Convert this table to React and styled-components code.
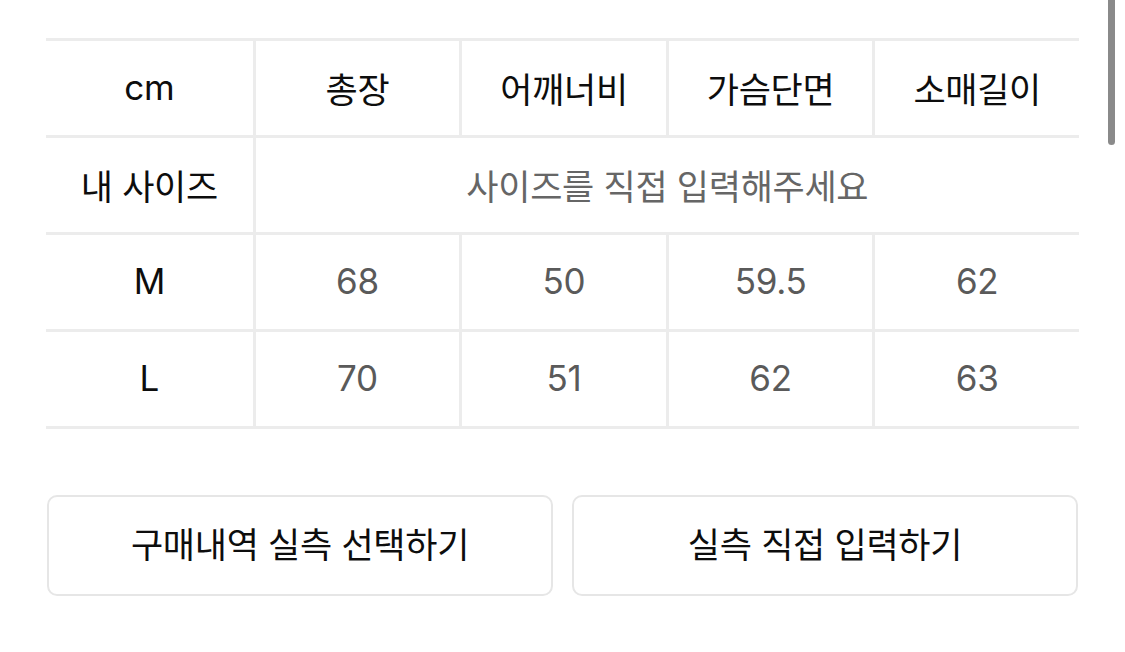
import React from 'react';
import styled, { createGlobalStyle } from 'styled-components';

const GlobalStyle = createGlobalStyle`
  html, body {
    margin: 0;
    padding: 0;
    background: #ffffff;
  }
  body {
    font-family: 'Inter', 'Noto Sans CJK KR', sans-serif;
    color: #111111;
    overflow: hidden;
  }
`;

const Page = styled.div`
  position: relative;
  width: 1125px;
  height: 652px;
  padding: 38px 46px 0;
  box-sizing: border-box;
`;

const Table = styled.div`
  display: grid;
  grid-template-columns: repeat(5, 1fr);
  border-top: 3px solid #ececec;
`;

const Cell = styled.div`
  grid-column: span ${p => p.span || 1};
  height: 97px;
  padding-bottom: 2px;
  box-sizing: border-box;
  display: flex;
  align-items: center;
  justify-content: center;
  border-bottom: 3px solid #ececec;
  border-left: ${p => (p.first ? 'none' : '3px solid #ececec')};
  font-size: 35px;
  font-weight: 400;
  color: ${p => (p.head ? '#0d0d0d' : p.muted ? '#666666' : '#5a5a5a')};
  letter-spacing: -0.3px;
`;

const Actions = styled.div`
  display: flex;
  gap: 19px;
  margin-top: 66px;
  padding: 0 1px;
`;

const ActionButton = styled.button`
  flex: 1;
  height: 101px;
  padding: 0 0 6px;
  background: #ffffff;
  border: 2px solid #e6e6e6;
  border-radius: 10px;
  font-family: 'Inter', 'Noto Sans CJK KR', sans-serif;
  font-size: 35px;
  font-weight: 400;
  color: #0d0d0d;
  letter-spacing: -0.3px;
  cursor: pointer;
`;

const Scrollbar = styled.div`
  position: absolute;
  top: -6px;
  right: 10px;
  width: 7px;
  height: 151px;
  border-radius: 4px;
  background: #8a8a8a;
`;

const headers = ['cm', '총장', '어깨너비', '가슴단면', '소매길이'];
const sizes = [
  { name: 'M', values: ['68', '50', '59.5', '62'] },
  { name: 'L', values: ['70', '51', '62', '63'] },
];

export default function App() {
  return (
    <Page>
      <GlobalStyle />
      <Table>
        {headers.map((h, i) => (
          <Cell key={h} head first={i === 0}>
            {h}
          </Cell>
        ))}
        <Cell head first>내 사이즈</Cell>
        <Cell span={4} muted>
          사이즈를 직접 입력해주세요
        </Cell>
        {sizes.map(s => (
          <React.Fragment key={s.name}>
            <Cell head first>{s.name}</Cell>
            {s.values.map((v, i) => (
              <Cell key={i}>{v}</Cell>
            ))}
          </React.Fragment>
        ))}
      </Table>
      <Actions>
        <ActionButton>구매내역 실측 선택하기</ActionButton>
        <ActionButton>실측 직접 입력하기</ActionButton>
      </Actions>
      <Scrollbar />
    </Page>
  );
}
